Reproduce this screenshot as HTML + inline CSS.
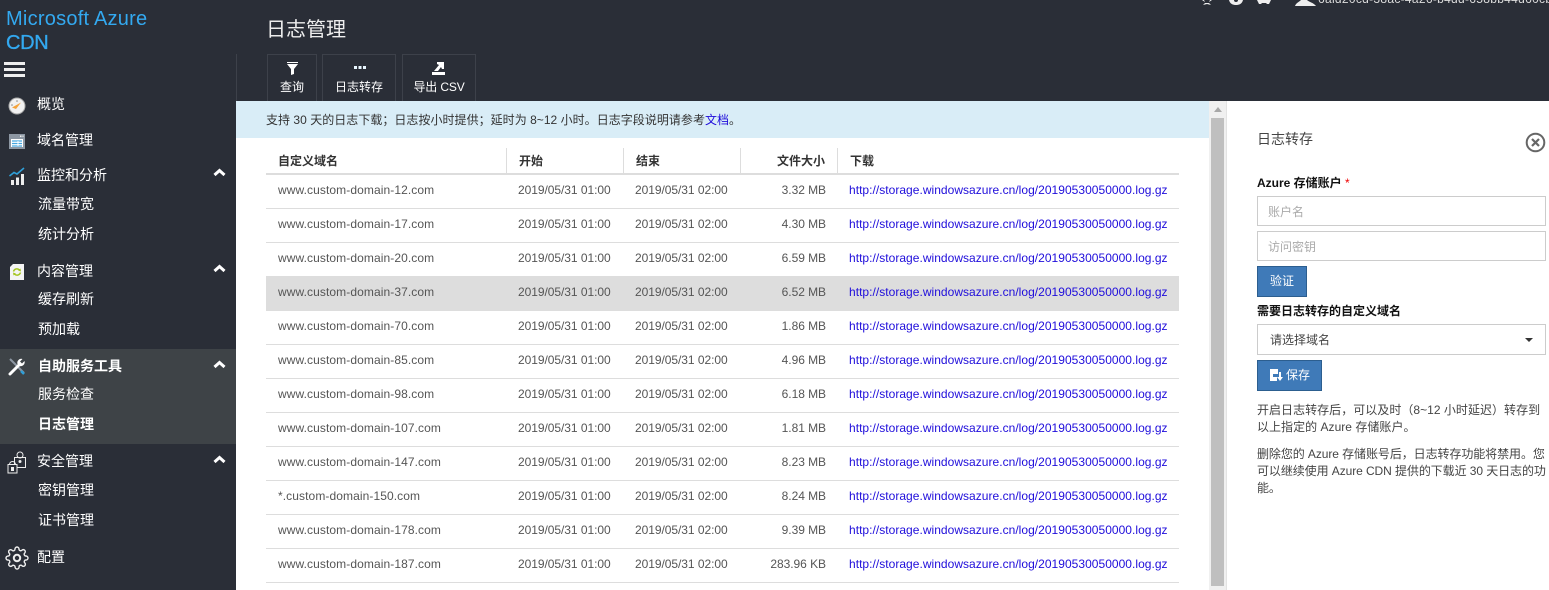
<!DOCTYPE html>
<html lang="zh-CN"><head><meta charset="utf-8"><title>日志管理</title>
<style>
html,body{margin:0;padding:0;width:1549px;height:590px;overflow:hidden;background:#fff}
body{position:relative;font-family:"Liberation Sans","Noto Sans CJK SC",sans-serif;font-size:12px;color:#444}
.a,.t{position:absolute;white-space:nowrap}
.t{line-height:18px}
.bg{position:absolute}
.n{color:#fff;font-size:14px;line-height:18px;position:absolute;white-space:nowrap}
.s{left:38px}.m{left:37px}
.b{font-weight:bold}
.ch{position:absolute;left:213px}
.th{position:absolute;top:152px;line-height:18px;font-weight:bold;color:#333;white-space:nowrap}
.tb{position:absolute;top:54px;height:46px;border:1px solid #3d414a;border-bottom:none;box-sizing:content-box;color:#fff;text-align:center}
.tb span{position:absolute;left:0;right:0;top:23px;line-height:18px}
.tb svg{position:absolute;top:6px}
.r{position:absolute;left:266px;width:913px;height:34px;border-bottom:1px solid #ddd;box-sizing:border-box}
.r span{position:absolute;top:6px;line-height:18px;white-space:nowrap;color:#555}
.r .d{left:12px;letter-spacing:.09px}
.r .s1{left:252px;letter-spacing:-.05px}
.r .s2{left:369px;letter-spacing:-.05px}
.r .z{right:353px;text-align:right;letter-spacing:-.05px}
.r .l{left:583px;color:#1f0ddb;letter-spacing:.03px}
.inp{position:absolute;left:1257px;width:289px;height:30px;border:1px solid #ccc;box-sizing:border-box;color:#aaa;padding-left:10px;line-height:30px}
.btn{position:absolute;left:1257px;background:#3f7ab8;border:1px solid #2c5e8f;box-sizing:border-box;color:#fff;text-align:center}
.p{position:absolute;left:1257px;width:295px;color:#444;line-height:17px;white-space:nowrap}
</style></head>
<body>
<div class="bg" style="left:0;top:0;width:1549px;height:101px;background:#2a2e37"></div>
<div class="bg" style="left:0;top:0;width:236px;height:590px;background:#2a2e37"></div>
<div class="bg" style="left:0;top:349px;width:236px;height:95px;background:#3e4347"></div>
<div class="bg" style="left:236px;top:54px;width:1px;height:47px;background:#3d414a"></div>

<div class="a" style="left:6px;top:7px;font-size:20px;line-height:24px;color:#33a9f0;letter-spacing:.24px">Microsoft Azure</div>
<div class="a" style="left:6px;top:31px;font-size:20px;line-height:24px;color:#33a9f0;letter-spacing:-.3px;-webkit-text-stroke:.3px #33a9f0">CDN</div>
<div class="bg" style="left:4px;top:62px;width:21px;height:3px;background:#eee"></div>
<div class="bg" style="left:4px;top:68px;width:21px;height:3px;background:#eee"></div>
<div class="bg" style="left:4px;top:74px;width:21px;height:3px;background:#eee"></div>

<svg class="a" style="left:8px;top:97px" width="18" height="18" viewBox="0 0 18 18"><circle cx="9" cy="9" r="8" fill="#f1f1f1" stroke="#aaa"/><path d="M4 10.5L13 5.5L8 12Z" fill="#f5a33b"/><circle cx="4" cy="8" r=".8" fill="#888"/><circle cx="9" cy="4" r=".8" fill="#888"/></svg>
<div class="n m" style="top:95px">概览</div>
<svg class="a" style="left:9px;top:134px" width="16" height="15" viewBox="0 0 16 15"><rect width="16" height="15" fill="#8d97a3"/><rect x="2" y="5" width="12" height="8" fill="#fff"/><path d="M3 7h10M3 9.500h10M3 12h10" stroke="#46a6e0" stroke-width="1.200"/><path d="M9 7v5" stroke="#fff"/><rect x="11" y="1.500" width="1.500" height="1.500" fill="#eee"/><rect x="13.500" y="1.500" width="1" height="1.500" fill="#eee"/></svg>
<div class="n m" style="top:131px">域名管理</div>
<svg class="a" style="left:9px;top:167px" width="16" height="18" viewBox="0 0 16 18"><path d="M.5 9L5 5.500 8 7 15 1" fill="none" stroke="#2f9fd8" stroke-width="1.600"/><rect x="2" y="13" width="3" height="5" fill="#eee"/><rect x="7" y="10.500" width="3" height="7.500" fill="#eee"/><rect x="12" y="7" width="3" height="11" fill="#eee"/></svg>
<div class="n m" style="top:166px">监控和分析</div>
<div class="n s" style="top:195px">流量带宽</div>
<div class="n s" style="top:225px">统计分析</div>
<svg class="a" style="left:10px;top:264px" width="14" height="16" viewBox="0 0 14 16"><path d="M3 0H14V16H0V3Z" fill="#f4f4f4"/><path d="M3.500 7.500a3.500 3.500 0 0 1 6-1.500M10.500 8.500a3.500 3.500 0 0 1-6 1.500" fill="none" stroke="#a4c41e" stroke-width="1.500"/><path d="M8 6.500l2.500-2 .5 3zM6 9.500l-2.500 2-.5-3z" fill="#a4c41e"/></svg>
<div class="n m" style="top:262px">内容管理</div>
<div class="n s" style="top:290px">缓存刷新</div>
<div class="n s" style="top:320px">预加载</div>
<svg class="a" style="left:8px;top:358px" width="18" height="18" viewBox="0 0 18 18"><path d="M2 1L16 15" stroke="#8d97a3" stroke-width="2"/><path d="M13 13l3 3" stroke="#2f9fd8" stroke-width="2.500"/><path d="M2 16L10.500 7.500" stroke="#fff" stroke-width="3" stroke-linecap="round"/><path d="M9.500 6a4 4 0 0 1 5-5l-2.500 2.500 2 2 2.500-2.500a4 4 0 0 1-5 5z" fill="#fff"/></svg>
<div class="n s b" style="top:357px">自助服务工具</div>
<div class="n s" style="top:385px">服务检查</div>
<div class="n s b" style="top:415px">日志管理</div>
<svg class="a" style="left:7px;top:451px" width="20" height="23" viewBox="0 0 20 23" fill="none" stroke="#eee" stroke-width="1"><circle cx="13" cy="4" r="3"/><rect x="7.500" y="6.500" width="11" height="10" /><circle cx="13" cy="10.500" r="1" fill="#eee"/><rect x="1" y="13.500" width="9" height="8.500" fill="#2a2e37"/><path d="M2.500 13.500a3 3 0 0 1 6 0"/><rect x="4.500" y="16.500" width="2" height="3" fill="#eee"/></svg>
<div class="n m" style="top:452px">安全管理</div>
<div class="n s" style="top:481px">密钥管理</div>
<div class="n s" style="top:511px">证书管理</div>
<svg class="a" style="left:5px;top:546px" width="24" height="24" viewBox="0 0 24 24" fill="none" stroke="#eee" stroke-width="1.400"><circle cx="12" cy="12" r="3.200" stroke-width="2"/><path d="M19.400 15a1.650 1.650 0 0 0 .33 1.820l.06.06a2 2 0 0 1 0 2.830 2 2 0 0 1-2.830 0l-.06-.06a1.650 1.650 0 0 0-1.820-.33 1.650 1.650 0 0 0-1 1.510V21a2 2 0 0 1-2 2 2 2 0 0 1-2-2v-.09A1.650 1.650 0 0 0 9 19.400a1.650 1.650 0 0 0-1.820.33l-.06.06a2 2 0 0 1-2.830 0 2 2 0 0 1 0-2.830l.06-.06a1.650 1.650 0 0 0 .33-1.820 1.650 1.650 0 0 0-1.510-1H3a2 2 0 0 1-2-2 2 2 0 0 1 2-2h.09A1.650 1.650 0 0 0 4.600 9a1.650 1.650 0 0 0-.33-1.820l-.06-.06a2 2 0 0 1 0-2.830 2 2 0 0 1 2.830 0l.06.06a1.650 1.650 0 0 0 1.820.33H9a1.650 1.650 0 0 0 1-1.510V3a2 2 0 0 1 2-2 2 2 0 0 1 2 2v.09a1.650 1.650 0 0 0 1 1.510 1.650 1.650 0 0 0 1.820-.33l.06-.06a2 2 0 0 1 2.830 0 2 2 0 0 1 0 2.830l-.06.06a1.650 1.650 0 0 0-.33 1.820V9a1.650 1.650 0 0 0 1.510 1H21a2 2 0 0 1 2 2 2 2 0 0 1-2 2h-.09a1.650 1.650 0 0 0-1.510 1z"/></svg>
<div class="n m" style="top:548px">配置</div>

<svg class="ch" style="top:168px" width="13" height="9" viewBox="0 0 13 9"><path d="M1.500 7L6.500 2.500 11.500 7" fill="none" stroke="#fff" stroke-width="3"/></svg>
<svg class="ch" style="top:264px" width="13" height="9" viewBox="0 0 13 9"><path d="M1.500 7L6.500 2.500 11.500 7" fill="none" stroke="#fff" stroke-width="3"/></svg>
<svg class="ch" style="top:360px" width="13" height="9" viewBox="0 0 13 9"><path d="M1.500 7L6.500 2.500 11.500 7" fill="none" stroke="#fff" stroke-width="3"/></svg>
<svg class="ch" style="top:455px" width="13" height="9" viewBox="0 0 13 9"><path d="M1.500 7L6.500 2.500 11.500 7" fill="none" stroke="#fff" stroke-width="3"/></svg>

<svg class="a" style="left:1199px;top:0" width="120" height="6" viewBox="0 0 120 6" fill="#eee"><path d="M3 0h2l1 2zM11 0h2l-3 2zM6 3h4l2 2-4-1-4 1z"/><path d="M30 0h14c-1 4-4 5-7 5s-6-1-7-5z"/><circle cx="37" cy="0" r="2" fill="#2a2e37"/><path d="M58 0h14l-2 4h-2l-1-1h-4l-1 1h-2z"/><path d="M96 6c1-3 4-4 6-6h6c2 2 7 3 9 6z"/></svg>
<div class="a" style="left:1318px;top:-8px;font-size:12px;line-height:14px;color:#ddd;letter-spacing:.3px">6ald20cd-38ac-4a26-b4dd-658bb44d60cb</div>

<div class="a" style="left:266px;top:17px;font-size:20px;line-height:26px;color:#eee">日志管理</div>

<div class="tb" style="left:267px;width:48px"><svg style="left:19px;top:7px" width="11" height="13" viewBox="0 0 11 13"><path d="M0 0h11v1H0zM0 2h11L7 7v5l-3 1V7z" fill="#fff"/></svg><span>查询</span></div>
<div class="tb" style="left:322px;width:72px"><svg style="left:31px" width="12" height="14" viewBox="0 0 12 14"><path d="M0 5h3v3H0zM4.500 5h3v3h-3zM9 5h3v3H9z" fill="#e8f6ff"/></svg><span>日志转存</span></div>
<div class="tb" style="left:402px;width:72px"><svg style="left:29px;top:7px" width="13" height="13" viewBox="0 0 13 13"><path d="M0 10h13v3H0z" fill="#fff"/><path d="M5 0h7v7H10L9 5 6 9H2L7 3 5 2z" fill="#fff"/></svg><span style="letter-spacing:-.15px">导出 CSV</span></div>

<div class="bg" style="left:236px;top:101px;width:973px;height:37px;background:#d9edf7"></div>
<div class="t" style="left:266px;top:111px;color:#333;letter-spacing:.03px">支持 30 天的日志下载；日志按小时提供；延时为 8~12 小时。日志字段说明请参考<span style="color:#1f0ddb">文档</span>。</div>

<div class="th" style="left:278px">自定义域名</div>
<div class="th" style="left:519px">开始</div>
<div class="th" style="left:636px">结束</div>
<div class="th" style="left:777px">文件大小</div>
<div class="th" style="left:850px">下载</div>
<div class="bg" style="left:506px;top:148px;width:1px;height:25px;background:#ddd"></div>
<div class="bg" style="left:623px;top:148px;width:1px;height:25px;background:#ddd"></div>
<div class="bg" style="left:740px;top:148px;width:1px;height:25px;background:#ddd"></div>
<div class="bg" style="left:837px;top:148px;width:1px;height:25px;background:#ddd"></div>
<div class="bg" style="left:266px;top:173px;width:913px;height:2px;background:#ddd"></div>

<div class="r" style="top:175px"><span class="d">www.custom-domain-12.com</span><span class="s1">2019/05/31 01:00</span><span class="s2">2019/05/31 02:00</span><span class="z">3.32 MB</span><span class="l">http://storage.windowsazure.cn/log/20190530050000.log.gz</span></div>
<div class="r" style="top:209px"><span class="d">www.custom-domain-17.com</span><span class="s1">2019/05/31 01:00</span><span class="s2">2019/05/31 02:00</span><span class="z">4.30 MB</span><span class="l">http://storage.windowsazure.cn/log/20190530050000.log.gz</span></div>
<div class="r" style="top:243px"><span class="d">www.custom-domain-20.com</span><span class="s1">2019/05/31 01:00</span><span class="s2">2019/05/31 02:00</span><span class="z">6.59 MB</span><span class="l">http://storage.windowsazure.cn/log/20190530050000.log.gz</span></div>
<div class="r" style="top:277px;background:#ddd"><span class="d">www.custom-domain-37.com</span><span class="s1">2019/05/31 01:00</span><span class="s2">2019/05/31 02:00</span><span class="z">6.52 MB</span><span class="l">http://storage.windowsazure.cn/log/20190530050000.log.gz</span></div>
<div class="r" style="top:311px"><span class="d">www.custom-domain-70.com</span><span class="s1">2019/05/31 01:00</span><span class="s2">2019/05/31 02:00</span><span class="z">1.86 MB</span><span class="l">http://storage.windowsazure.cn/log/20190530050000.log.gz</span></div>
<div class="r" style="top:345px"><span class="d">www.custom-domain-85.com</span><span class="s1">2019/05/31 01:00</span><span class="s2">2019/05/31 02:00</span><span class="z">4.96 MB</span><span class="l">http://storage.windowsazure.cn/log/20190530050000.log.gz</span></div>
<div class="r" style="top:379px"><span class="d">www.custom-domain-98.com</span><span class="s1">2019/05/31 01:00</span><span class="s2">2019/05/31 02:00</span><span class="z">6.18 MB</span><span class="l">http://storage.windowsazure.cn/log/20190530050000.log.gz</span></div>
<div class="r" style="top:413px"><span class="d">www.custom-domain-107.com</span><span class="s1">2019/05/31 01:00</span><span class="s2">2019/05/31 02:00</span><span class="z">1.81 MB</span><span class="l">http://storage.windowsazure.cn/log/20190530050000.log.gz</span></div>
<div class="r" style="top:447px"><span class="d">www.custom-domain-147.com</span><span class="s1">2019/05/31 01:00</span><span class="s2">2019/05/31 02:00</span><span class="z">8.23 MB</span><span class="l">http://storage.windowsazure.cn/log/20190530050000.log.gz</span></div>
<div class="r" style="top:481px"><span class="d">*.custom-domain-150.com</span><span class="s1">2019/05/31 01:00</span><span class="s2">2019/05/31 02:00</span><span class="z">8.24 MB</span><span class="l">http://storage.windowsazure.cn/log/20190530050000.log.gz</span></div>
<div class="r" style="top:515px"><span class="d">www.custom-domain-178.com</span><span class="s1">2019/05/31 01:00</span><span class="s2">2019/05/31 02:00</span><span class="z">9.39 MB</span><span class="l">http://storage.windowsazure.cn/log/20190530050000.log.gz</span></div>
<div class="r" style="top:549px"><span class="d">www.custom-domain-187.com</span><span class="s1">2019/05/31 01:00</span><span class="s2">2019/05/31 02:00</span><span class="z">283.96 KB</span><span class="l">http://storage.windowsazure.cn/log/20190530050000.log.gz</span></div>

<div class="bg" style="left:1209px;top:101px;width:17px;height:489px;background:#f0f0f0"></div>
<div class="bg" style="left:1211px;top:118px;width:13px;height:468px;background:#bfbfbf"></div>
<div class="bg" style="left:1214px;top:107px;width:0;height:0;border-left:4px solid transparent;border-right:4px solid transparent;border-bottom:5px solid #a8a8a8"></div>
<div class="bg" style="left:1226px;top:101px;width:1px;height:489px;background:#e3e3e3"></div>

<div class="a" style="left:1257px;top:130px;font-size:14px;line-height:18px;color:#444">日志转存</div>
<svg class="a" style="left:1525px;top:132px" width="21" height="21" viewBox="0 0 21 21"><circle cx="10.500" cy="10.500" r="8.800" fill="none" stroke="#666" stroke-width="2"/><path d="M7 7l7 7M14 7l-7 7" stroke="#666" stroke-width="2.200"/></svg>

<div class="t b" style="left:1257px;top:174px;color:#111">Azure 存储账户 <span style="color:#e00;font-weight:normal">*</span></div>
<div class="inp" style="top:196px">账户名</div>
<div class="inp" style="top:231px">访问密钥</div>
<div class="btn" style="top:266px;width:50px;height:31px;line-height:29px;font-size:12px">验证</div>
<div class="t b" style="left:1257px;top:302px;color:#111">需要日志转存的自定义域名</div>
<div class="inp" style="top:324px;height:31px;color:#444;padding-left:12px;line-height:31px">请选择域名</div>
<div class="bg" style="left:1525px;top:338px;width:0;height:0;border-left:4px solid transparent;border-right:4px solid transparent;border-top:4px solid #333"></div>
<div class="btn" style="top:360px;width:65px;height:31px;line-height:29px"><svg style="position:absolute;left:12px;top:8px" width="13" height="13" viewBox="0 0 13 13"><path d="M0 0h8v5H3V0zM0 0h3v12H0zM3 8h4v4H3zM6 0h2v5H6z" fill="#fff"/><path d="M9 3h2v5h2l-3 4-3-4h2z" fill="#fff"/></svg><span style="position:absolute;left:28px;top:0;white-space:nowrap">保存</span></div>

<div class="p" style="top:402px;letter-spacing:.03px">开启日志转存后，可以及时（8~12 小时延迟）转存到<br>以上指定的 Azure 存储账户。</div>
<div class="p" style="top:446px;letter-spacing:-.08px">删除您的 Azure 存储账号后，日志转存功能将禁用。您<br>可以继续使用 Azure CDN 提供的下载近 30 天日志的功<br>能。</div>
</body></html>
